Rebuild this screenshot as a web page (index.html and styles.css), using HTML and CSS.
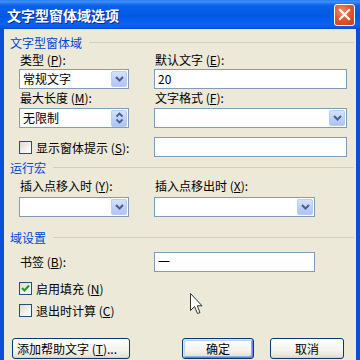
FILE: index.html
```html
<!DOCTYPE html>
<html lang="zh-CN">
<head>
<meta charset="utf-8">
<title>文字型窗体域选项</title>
<link rel="stylesheet" href="styles.css">
</head>
<body>
<div class="window">
  <div class="titlebar">
    <span class="title">文字型窗体域选项</span>
    <span class="close"><svg width="13" height="13" viewBox="0 0 13 13"><path d="M2 2 L11 11 M11 2 L2 11" stroke="#fff" stroke-width="2.2" stroke-linecap="square"/></svg></span>
  </div>
  <div class="client">
    <div class="legend"><span>文字型窗体域</span><i></i></div>

    <div class="row labels r-lab1">
      <span class="lbl">类型 (<u>P</u>):</span>
      <span class="lbl">默认文字 (<u>E</u>):</span>
    </div>
    <div class="row ctrls r-ctl1">
      <div class="box combo"><span class="val">常规文字</span><span class="dd"><svg width="9" height="6" viewBox="0 0 9 6"><path d="M1 1 L4.5 4.5 L8 1" fill="none" stroke="#4D6185" stroke-width="2"/></svg></span></div>
      <div class="box"><span class="val">20</span></div>
    </div>
    <div class="row labels r-lab2">
      <span class="lbl">最大长度 (<u>M</u>):</span>
      <span class="lbl">文字格式 (<u>F</u>):</span>
    </div>
    <div class="row ctrls r-ctl2">
      <div class="box combo"><span class="val">无限制</span><span class="dd spin"><svg width="9" height="12" viewBox="0 0 9 12"><path d="M1.5 4.5 L4.5 1.5 L7.5 4.5 M1.5 7.5 L4.5 10.5 L7.5 7.5" fill="none" stroke="#4D6185" stroke-width="1.8"/></svg></span></div>
      <div class="box combo"><span class="val"></span><span class="dd"><svg width="9" height="6" viewBox="0 0 9 6"><path d="M1 1 L4.5 4.5 L8 1" fill="none" stroke="#4D6185" stroke-width="2"/></svg></span></div>
    </div>
    <div class="row ctrls r-ctl3">
      <div class="check"><span class="cb"></span><span>显示窗体提示 (<u>S</u>):</span></div>
      <div class="box"><span class="val"></span></div>
    </div>

    <div class="legend lg2"><span>运行宏</span><i></i></div>
    <div class="row labels r-lab3">
      <span class="lbl">插入点移入时 (<u>Y</u>):</span>
      <span class="lbl">插入点移出时 (<u>X</u>):</span>
    </div>
    <div class="row ctrls narrow r-ctl4">
      <div class="box combo"><span class="val"></span><span class="dd"><svg width="9" height="6" viewBox="0 0 9 6"><path d="M1 1 L4.5 4.5 L8 1" fill="none" stroke="#4D6185" stroke-width="2"/></svg></span></div>
      <div class="box combo"><span class="val"></span><span class="dd"><svg width="9" height="6" viewBox="0 0 9 6"><path d="M1 1 L4.5 4.5 L8 1" fill="none" stroke="#4D6185" stroke-width="2"/></svg></span></div>
    </div>

    <div class="legend lg3"><span>域设置</span><i></i></div>
    <div class="row ctrls narrow r-book">
      <span class="lbl mid">书签 (<u>B</u>):</span>
      <div class="box"><span class="val">一</span></div>
    </div>
    <div class="check r-chk1"><span class="cb"><svg width="11" height="11" viewBox="0 0 11 11"><path d="M2 5 L4.5 7.5 L9 2.5" fill="none" stroke="#21A121" stroke-width="2.2"/></svg></span><span>启用填充 (<u>N</u>)</span></div>
    <div class="check r-chk2"><span class="cb"></span><span>退出时计算 (<u>C</u>)</span></div>

    <div class="buttons">
      <span class="btn btn-help">添加帮助文字 (<u>T</u>)...</span>
      <span class="btn btn-ok">确定</span>
      <span class="btn btn-cancel">取消</span>
    </div>
  </div>
  <svg class="cursor" width="13" height="22" viewBox="0 0 13 22"><path d="M0.5 0.5 L0.5 17.5 L4.5 13.5 L7.5 20.5 L10 19.5 L7.2 12.8 L12 12.8 Z" fill="#fff" stroke="#333" stroke-width="1" stroke-linejoin="round"/></svg>
</div>
</body>
</html>
```
FILE: styles.css
```css
* { box-sizing: border-box; }
html, body { margin: 0; padding: 0; }
body {
  width: 360px;
  height: 360px;
  overflow: hidden;
  background: #ECE9D8;
  font-family: "Noto Sans CJK SC", "Noto Sans", sans-serif;
  font-size: 12px;
  color: #000;
}
u { text-decoration: underline; text-underline-offset: 1px; }

.window {
  width: 360px;
  height: 360px;
  display: flex;
  flex-direction: column;
  position: relative;
}

.titlebar {
  height: 29px;
  flex: none;
  display: flex;
  align-items: center;
  justify-content: space-between;
  padding: 0 5px 0 7px;
  background: linear-gradient(#2A7BF0 0%, #3D8FF8 6%, #0C62E8 18%, #0058E6 55%, #0A62EE 85%, #0B5ADF 94%, #0846C8 100%);
}
.title {
  color: #fff;
  font-weight: bold;
  font-size: 14px;
  line-height: 16px;
  text-shadow: 1px 1px 0 #0A2A8E;
}
.close {
  width: 21px;
  height: 22px;
  border: 1px solid #fff;
  border-radius: 3px;
  background: radial-gradient(circle at 35% 30%, #EE8B6E 0%, #E2582F 45%, #C8401A 100%);
  display: flex;
  align-items: center;
  justify-content: center;
}

.client {
  flex: 1;
  border-left: 4px solid #0B4ED8;
  border-right: 4px solid #0B4ED8;
  padding-left: 6px;
  display: flex;
  flex-direction: column;
}

.legend {
  display: flex;
  align-items: center;
  height: 15px;
  line-height: 15px;
  margin-top: 6px;
  margin-right: 2px;
  color: #0046D5;
}
.legend i {
  flex: 1;
  height: 1px;
  background: #D0D0BF;
  margin-left: 7px;
}
.lg2 { margin-top: 3px; }
.lg3 { margin-top: 13px; }

.row {
  display: grid;
  grid-template-columns: 110px 193px;
  column-gap: 25px;
  margin-left: 9px;
}
.row.narrow { grid-template-columns: 110px 161px; }
.labels { height: 14px; line-height: 14px; }
.ctrls { height: 20px; }
.lbl { padding-left: 1px; white-space: nowrap; }
.lbl.mid { align-self: center; line-height: 14px; }

.r-lab1 { margin-top: 3px; }
.r-ctl1 { margin-top: 2px; }
.r-lab2 { margin-top: 2px; }
.r-ctl2 { margin-top: 3px; }
.r-ctl3 { margin-top: 9px; }
.r-lab3 { margin-top: 4px; }
.r-ctl4 { margin-top: 4px; }
.r-book { margin-top: 7px; }

.box {
  height: 20px;
  border: 1px solid #7F9DB9;
  background: #fff;
  display: flex;
  align-items: center;
}
.val {
  flex: 1;
  padding-left: 3px;
  line-height: 18px;
  white-space: nowrap;
}
.dd {
  width: 16px;
  height: 16px;
  margin: 0 1px 0 0;
  border: 1px solid #B9CCF5;
  border-radius: 2px;
  background: linear-gradient(#D6E2FD, #BCCEF8 60%, #B0C4F4);
  display: flex;
  align-items: center;
  justify-content: center;
}
.dd.spin { height: 17px; }

.check {
  display: flex;
  align-items: center;
  gap: 4px;
  white-space: nowrap;
}
.cb {
  width: 13px;
  height: 13px;
  flex: none;
  border: 1px solid #1C5180;
  background: linear-gradient(135deg, #DCDCD5, #F6F6F3 70%, #fff);
  display: flex;
  align-items: center;
  justify-content: center;
}
.r-chk1 { margin-left: 9px; margin-top: 7px; height: 19px; }
.r-chk2 { margin-left: 9px; margin-top: 3px; height: 19px; }

.buttons {
  display: flex;
  margin-top: 18px;
  padding-left: 2px;
}
.btn {
  height: 21px;
  border: 1px solid #003C74;
  border-radius: 3px;
  background: linear-gradient(#FFFFFF, #F4F3EE 60%, #E6E3D8 90%, #D6D0C5);
  display: flex;
  align-items: center;
  justify-content: center;
  line-height: 19px;
  white-space: nowrap;
}
.btn-help { width: 118px; justify-content: flex-start; padding-left: 4px; }
.btn-ok {
  width: 72px;
  margin-left: 52px;
  box-shadow: inset 1px 1px 0 #CEE7FF, inset -1px -1px 0 #6982EE, inset 2px 2px 0 #BCD4F6, inset -2px -2px 0 #89ADE4;
}
.btn-cancel { width: 74px; margin-left: 16px; }

.cursor {
  position: absolute;
  left: 190px;
  top: 293px;
}
```
